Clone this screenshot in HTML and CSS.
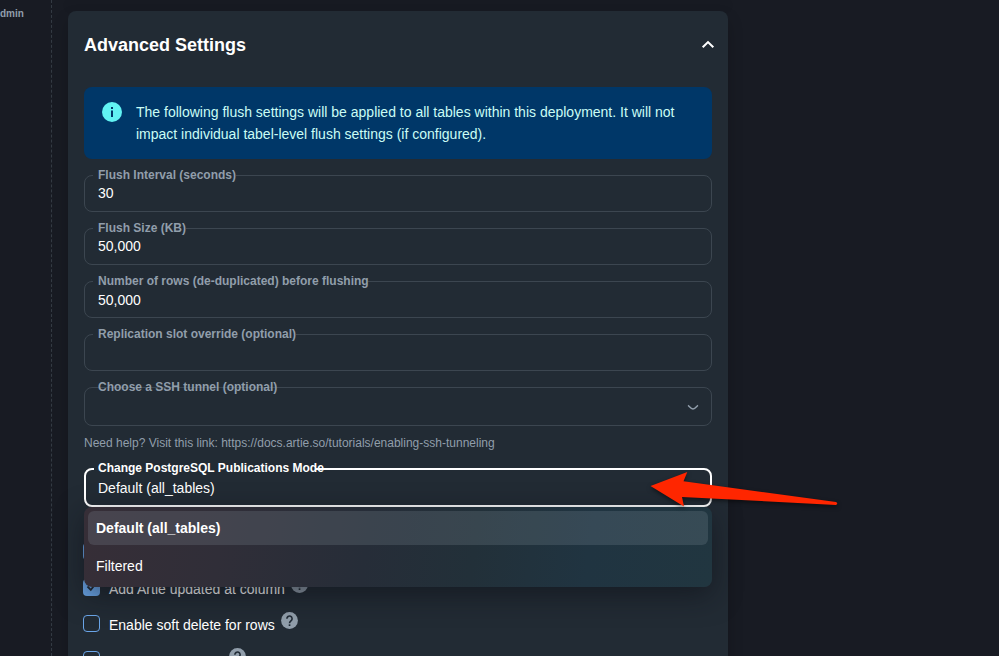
FILE: index.html
```html
<!DOCTYPE html>
<html lang="en">
<head>
<meta charset="utf-8">
<title>Advanced Settings</title>
<link rel="stylesheet" href="styles.css">
</head>
<body>
<div class="app">
  <aside class="sidebar"><span class="role">dmin</span></aside>
  <main class="main">
    <div class="previous-card"></div>
    <section class="card">
      <header class="card-head">
        <h2>Advanced Settings</h2>
        <svg class="chev-up" viewBox="0 0 14 9"><path d="M1.700 7.200 7 2.100l5.300 5.100" fill="none" stroke="#fff" stroke-width="2.100"/></svg>
      </header>
      <div class="alert">
        <svg class="info" viewBox="0 0 20 20"><circle cx="10" cy="10" r="10" fill="#61f3f3"/><path d="M9 5h2v2H9zM9 8.500h2V15H9z" fill="#003768"/></svg>
        <p>The following flush settings will be applied to all tables within this deployment. It will not<br>impact individual tabel-level flush settings (if configured).</p>
      </div>
      <div class="field"><i class="notch n1"></i><label>Flush Interval (seconds)</label><span class="value">30</span></div>
      <div class="field"><i class="notch n2"></i><label>Flush Size (KB)</label><span class="value">50,000</span></div>
      <div class="field"><i class="notch n3"></i><label>Number of rows (de-duplicated) before flushing</label><span class="value low">50,000</span></div>
      <div class="field"><i class="notch n4"></i><label>Replication slot override (optional)</label></div>
      <div class="field tall"><label>Choose a SSH tunnel (optional)</label>
        <svg class="chev-down" viewBox="0 0 12 7"><path d="M1 1.300c1 .6 3 3.700 5 3.700s4-3.100 5-3.700" fill="none" stroke="#919eab" stroke-width="1.500"/></svg>
      </div>
      <p class="helper">Need help? Visit this link: https://docs.artie.so/tutorials/enabling-ssh-tunneling</p>
      <div class="field tall focused"><i class="notch n6"></i><label>Change PostgreSQL Publications Mode</label><span class="value">Default (all_tables)</span>
        <div class="menu">
          <div class="option selected">Default (all_tables)</div>
          <div class="option">Filtered</div>
        </div>
      </div>
      <div class="checks">
        <div class="check"><span class="box on hidden-row"></span></div>
        <div class="check"><span class="box on"><svg viewBox="0 0 17 17"><path d="M4.500 7.500 7.800 10.800 12.500 5" fill="none" stroke="#212b36" stroke-width="1.800"/></svg></span><span class="text">Add Artie updated at column</span><svg class="help" viewBox="0 0 17 17"><use href="#q"/></svg></div>
        <div class="check"><span class="box"></span><span class="text">Enable soft delete for rows</span><svg class="help" viewBox="0 0 17 17"><g id="q"><circle cx="8.500" cy="8.500" r="8.400" fill="#919eab"/><path d="M5.900 6.700a2.600 2.600 0 1 1 4.300 1.900C9.200 9.500 8.500 9.900 8.500 11.300" fill="none" stroke="#212b36" stroke-width="1.600"/><path d="M7.700 12.300h1.700v1.700H7.700z" fill="#212b36"/></g></svg></div>
        <div class="check"><span class="box"></span><span class="text last">Enable heartbeats</span><svg class="help" viewBox="0 0 17 17"><use href="#q"/></svg></div>
      </div>
    </section>
  </main>
</div>
<svg class="arrow" viewBox="640 460 210 60"><path d="M650.500 486 687.300 472 683.500 481.200 836 502Q838.500 503.500 836 505L682 497 684 506.500Z" fill="#ff2600"/></svg>
</body>
</html>
```
FILE: styles.css
```css
* { box-sizing: border-box; }
body { margin: 0; background: #181b23; color: #fff; font-family: "Liberation Sans", Arial, sans-serif; font-size: 14px; }
.app { display: flex; width: 999px; height: 656px; overflow: hidden; }
.sidebar { width: 52px; flex: none; border-right: 1px dashed #333a43; padding-top: 7px; }
.role { display: block; font-size: 10px; line-height: 13px; font-weight: 700; color: #919eab; }
.main { padding-left: 16px; width: 676px; flex: none; }
.previous-card { height: 1px; margin: -1px 0 11px; box-shadow: 0 6px 12px rgba(0,0,0,.22); }
.card { width: 660px; height: 700px; padding: 0 16px; border-radius: 8px; background: #222b34; box-shadow: 0 8px 16px rgba(0,0,0,.2); }
.card-head { display: flex; align-items: center; justify-content: space-between; height: 68px; margin-bottom: 8px; }
h2 { margin: 0; font-size: 18px; line-height: 28px; font-weight: 700; }
.chev-up { width: 14px; height: 9px; margin: 0 -3px 2px 0; }
.alert { display: flex; gap: 14px; height: 72px; margin-bottom: 16px; padding: 14px 18px; border-radius: 8px; background: #003768; color: #cafdf5; }
.info { width: 20px; height: 20px; margin-top: 1px; flex: none; }
.alert p { margin: 0; line-height: 22px; white-space: nowrap; }
.field { position: relative; display: flex; height: 37px; margin-bottom: 16px; padding: 7px 13px; border: 1px solid #3c4650; border-radius: 8px; }
.field.tall { height: 39px; }
label { position: absolute; left: 13px; top: -8px; line-height: 14px; font-size: 12px; font-weight: 700; color: #919eab; white-space: nowrap; }
.notch { position: absolute; left: 8px; top: -1px; height: 1px; background: #222b34; }
.n1 { width: 143px; }
.n2 { width: 93px; }
.n3 { width: 275px; }
.n4 { width: 203px; }
.n6 { width: 222px; }
.value { line-height: 20px; }
.value.low { padding-top: 1px; }
.chev-down { width: 12px; height: 7px; margin: 9px -1px 0 auto; }
.helper { margin: -7px 0 17px; line-height: 16px; font-size: 12px; color: #919eab; white-space: nowrap; }
.field.focused { border: 2px solid #fff; padding: 8px 12px; }
.focused label { left: 12px; top: -9px; }
.focused label { color: #fff; }
.focused .notch { left: 8px; top: -2px; height: 2px; }
.menu { position: absolute; z-index: 2; left: -2px; top: 37px; width: 628px; height: 80px; padding: 4px; border-radius: 8px; background: linear-gradient(98deg, #362e37 0%, #302e38 22%, #262d38 45%, #223039 62%, #203441 80%, #213640 100%); box-shadow: 0 8px 28px rgba(12,14,22,.55); }
.option { height: 34px; margin-bottom: 4px; padding: 0 8px; border-radius: 6px; line-height: 34px; }
.option.selected { background: rgba(145,158,171,.2); font-weight: 700; }
.checks { margin: 36px 0 0 -1px; }
.check { display: flex; align-items: flex-start; height: 36px; }
.box { width: 17px; height: 17px; flex: none; border: 1.500px solid #6aa5e8; border-radius: 4px; }
.box.on { background: #6aa5e8; border: 0; }
.box svg { display: block; width: 17px; height: 17px; }
.text { margin: 0 6px 0 9px; line-height: 20px; white-space: nowrap; }
.text.last { padding-top: 1px; }
.help { width: 17px; height: 17px; margin-top: -3px; }
.arrow { position: absolute; left: 640px; top: 460px; width: 210px; height: 60px; z-index: 5; filter: drop-shadow(0 2px 2px rgba(0,0,0,.5)); }
```
